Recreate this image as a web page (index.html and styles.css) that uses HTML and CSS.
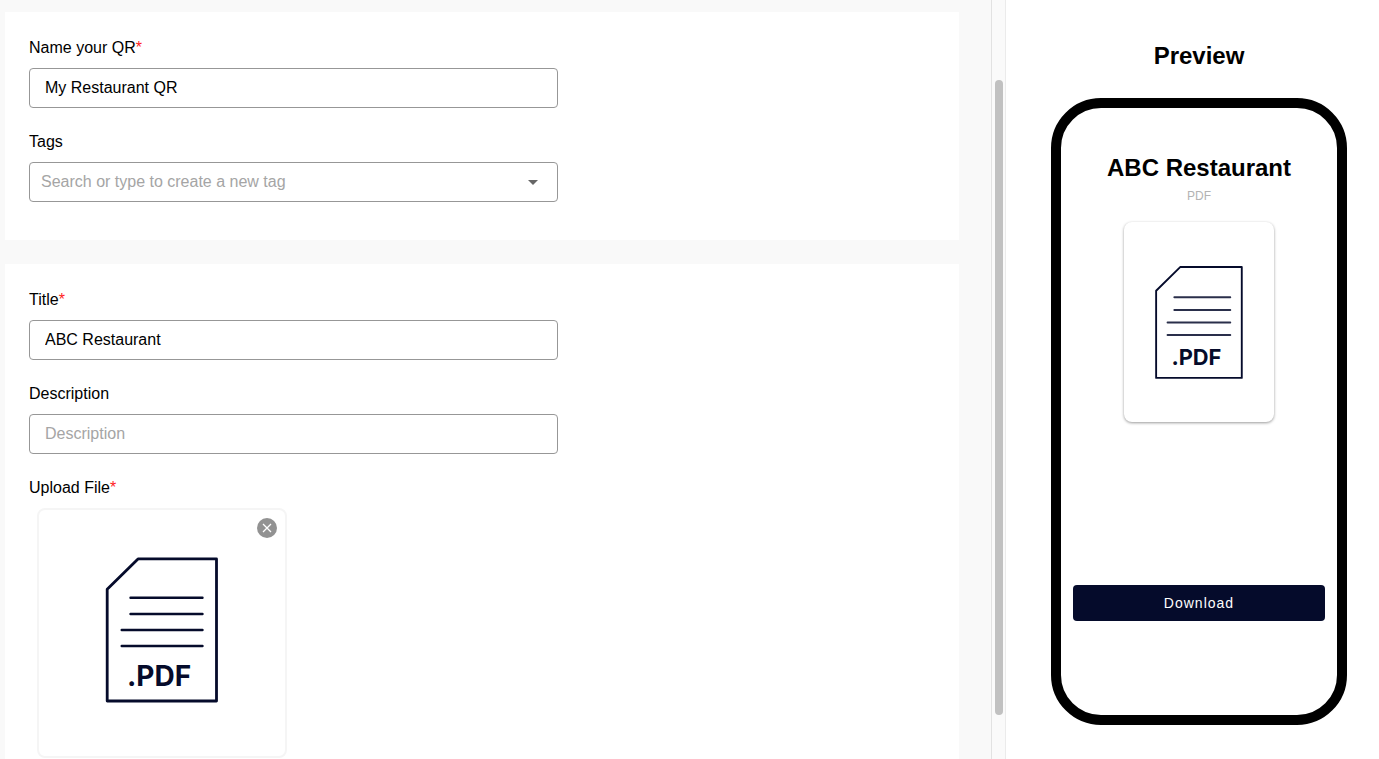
FILE: index.html
```html
<!DOCTYPE html>
<html lang="en">

<head>
    <meta charset="UTF-8">
    <meta name="viewport" content="width=device-width, initial-scale=1.0">
    <title>Create PDF QR</title>
    <link rel="stylesheet" href="styles.css">
</head>

<body>
    <div class="page">
        <main class="form-panel">
            <form>
                <section class="card">
                    <div class="field">
                        <label for="qr-name">Name your QR<span class="required">*</span></label>
                        <input type="text" id="qr-name" value="My Restaurant QR">
                    </div>
                    <div class="field">
                        <label for="tags">Tags</label>
                        <div class="combo">
                            <input type="text" id="tags" class="combo-input" placeholder="Search or type to create a new tag">
                            <button type="button" class="combo-arrow" aria-label="Open">
                                <svg width="24" height="24" viewBox="0 0 24 24"><path d="M7 10l5 5 5-5z" fill="#666" /></svg>
                            </button>
                        </div>
                    </div>
                </section>

                <section class="card">
                    <div class="field">
                        <label for="title">Title<span class="required">*</span></label>
                        <input type="text" id="title" value="ABC Restaurant">
                    </div>
                    <div class="field">
                        <label for="description">Description</label>
                        <input type="text" id="description" placeholder="Description">
                    </div>
                    <div class="field">
                        <label for="file">Upload File<span class="required">*</span></label>
                        <input type="file" id="file" accept=".pdf" hidden>
                        <div class="upload-box">
                            <svg class="upload-icon" viewBox="0 0 116 150">
                                <path d="M3.2 34.3 L34 3.9 H112.5 V146 H3.2 Z" fill="none" stroke="#050b2b" stroke-width="2.8" stroke-linejoin="round" />
                                <path d="M26.5 42.7 H98.5 M26.5 59 H98.5 M17.7 75 H98.5 M17.7 91 H98.5" stroke="#050b2b" stroke-width="2.4" stroke-linecap="round" />
                                <text x="23" y="130.5" class="pdf-text">.PDF</text>
                            </svg>
                            <button type="button" class="remove" aria-label="Remove file">
                                <svg width="20" height="20" viewBox="0 0 20 20"><path d="M6 6 L14 14 M14 6 L6 14" stroke="#fff" stroke-width="1.3" /></svg>
                            </button>
                        </div>
                    </div>
                </section>
            </form>
        </main>

        <div class="scroll-track">
            <div class="scroll-thumb"></div>
        </div>

        <aside class="preview">
            <h2>Preview</h2>
            <div class="phone">
                <h3>ABC Restaurant</h3>
                <p>PDF</p>
                <div class="file-card">
                    <svg class="file-icon" viewBox="0 0 116 150">
                        <path d="M2.4 34.3 L33.2 3.9 H112.2 V146 H2.4 Z" fill="none" stroke="#050b2b" stroke-width="2.4" stroke-linejoin="round" />
                        <path d="M25.7 42.7 H97.5 M25.7 59 H97.5 M17 75 H97.5 M17 91 H97.5" stroke="#050b2b" stroke-opacity="0.85" stroke-width="2.4" stroke-linecap="round" />
                        <text x="22" y="130" class="pdf-text">.PDF</text>
                    </svg>
                </div>
                <button type="button" class="download">Download</button>
            </div>
        </aside>
    </div>
</body>

</html>
```
FILE: styles.css
```css
* {
    box-sizing: border-box;
}

body {
    margin: 0;
    font-family: "Liberation Sans", Arial, sans-serif;
    font-size: 16px;
    line-height: 24px;
    color: #000;
    background-color: #fff;
}

h2,
h3,
p {
    margin: 0;
}

.page {
    display: flex;
    height: 100vh;
    overflow: hidden;
}

/* left side */
.form-panel {
    flex: 1;
    overflow: hidden;
    padding: 12px 32px 0 5px;
    background-color: #f9f9f9;
}

.card {
    background-color: #fff;
    padding: 24px 24px 16px;
    margin-bottom: 24px;
}

.field {
    max-width: 529px;
    margin-bottom: 22px;
}

label {
    display: block;
    margin-bottom: 8px;
}

.required {
    color: #f22;
}

input[type="text"] {
    display: block;
    width: 100%;
    height: 40px;
    padding: 0 15px;
    border: 1px solid #979797;
    border-radius: 4px;
    background-color: #fff;
    color: #000;
    font: inherit;
}

input::placeholder {
    color: #a5a5a5;
    opacity: 1;
}

.combo {
    position: relative;
}

input.combo-input {
    padding: 0 48px 0 11px;
}

.combo-arrow {
    position: absolute;
    top: 8px;
    right: 13px;
    width: 24px;
    height: 24px;
    padding: 0;
    border: 0;
    background: none;
}

.upload-box {
    position: relative;
    display: flex;
    justify-content: center;
    width: 250px;
    height: 250px;
    margin-left: 8px;
    padding-top: 45px;
    border: 2px solid #f5f5f5;
    border-radius: 8px;
}

.upload-icon {
    width: 116px;
    height: 150px;
}

.pdf-text {
    font-family: Inter, sans-serif;
    font-size: 28px;
    font-weight: 700;
    fill: #050b2b;
}

.remove {
    position: absolute;
    top: 8px;
    right: 8px;
    width: 20px;
    height: 20px;
    padding: 0;
    border: 0;
    border-radius: 50%;
    background-color: #929292;
}

.remove svg,
.combo-arrow svg {
    display: block;
}

/* scrollbar between the form and the preview */
.scroll-track {
    display: flex;
    width: 15px;
    padding: 80px 2px 44px 3px;
    border-left: 1px solid #e2e2e2;
    border-right: 1px solid #ebebeb;
    background-color: #fafafa;
}

.scroll-thumb {
    flex: 1;
    border-radius: 4px;
    background-color: #c1c1c1;
}

/* right side */
.preview {
    width: 373px;
    padding: 40px 32px 34px 45px;
    display: flex;
    flex-direction: column;
    text-align: center;
}

.preview h2,
.preview h3 {
    font-size: 24px;
    line-height: 32px;
}

.preview h2 {
    margin-bottom: 26px;
}

.phone {
    flex: 1;
    display: flex;
    flex-direction: column;
    align-items: center;
    padding: 44px 12px 94px;
    border: 10px solid #000;
    border-radius: 50px;
}

.phone p {
    font-size: 12px;
    color: #b3b3b3;
}

.file-card {
    display: flex;
    align-items: center;
    justify-content: center;
    width: 150px;
    height: 200px;
    margin-top: 14px;
    border-radius: 8px;
    box-shadow: 0 1px 3px rgba(0, 0, 0, 0.4);
}

.file-icon {
    width: 91px;
    height: 117px;
}

.download {
    width: 100%;
    height: 36px;
    margin-top: auto;
    border: 0;
    border-radius: 4px;
    background-color: #050b2b;
    color: #fff;
    font-family: inherit;
    font-size: 14px;
    letter-spacing: 1px;
}
```
